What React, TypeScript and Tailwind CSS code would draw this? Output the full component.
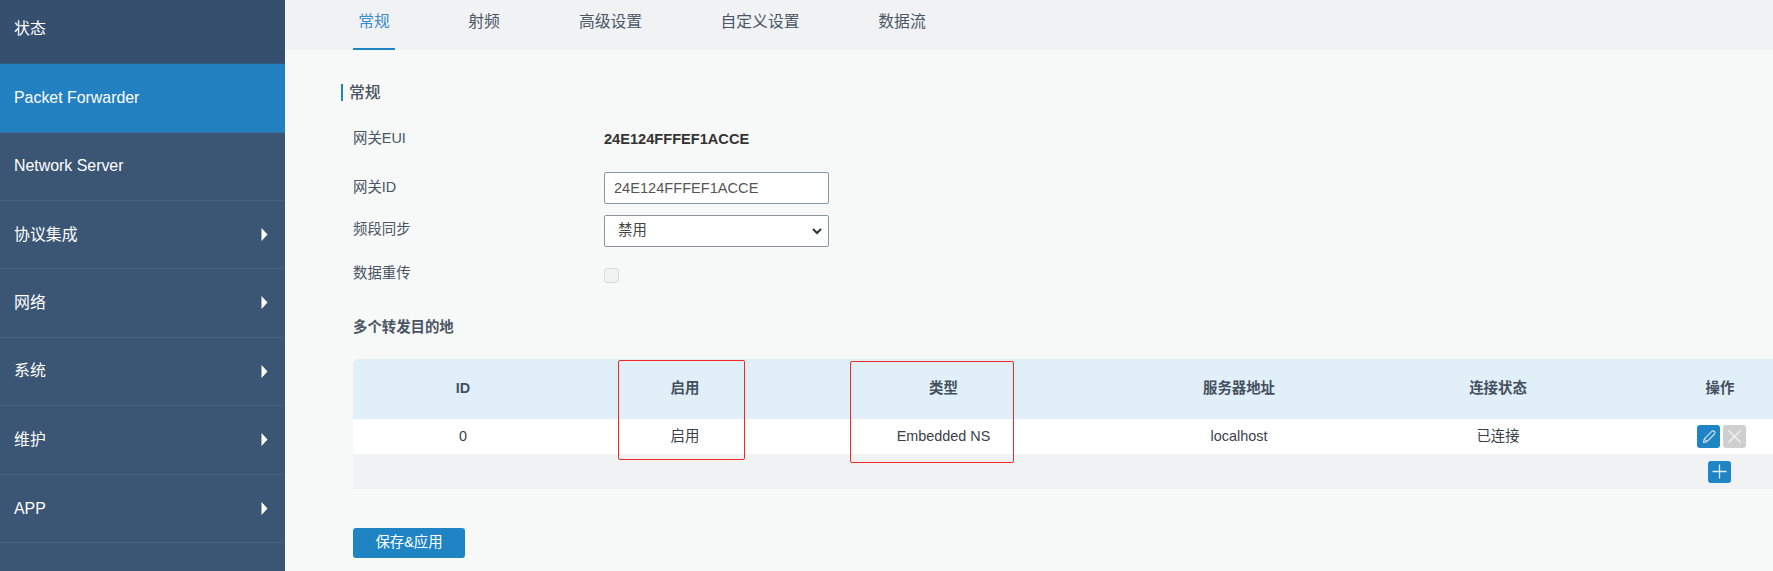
import React from "react";

const menu = [
  { t: "状态", arrow: false, cls: "h-[68.5px] -mt-[4.5px] pb-[1px] bg-[#364f6e] border-b border-[#2f5a85]" },
  { t: "Packet Forwarder", arrow: false, cls: "h-[69px] bg-[#2481c1] border-b border-[#3a6f9f]" },
  { t: "Network Server", arrow: false, cls: "h-[67.5px] border-b border-[#46617f]" },
  { t: "协议集成", arrow: true, cls: "h-[68.5px] pt-[1px] border-b border-[#46617f]" },
  { t: "网络", arrow: true, cls: "h-[68.5px] border-b border-[#46617f]" },
  { t: "系统", arrow: true, cls: "h-[68.5px] border-b border-[#46617f]" },
  { t: "维护", arrow: true, cls: "h-[68.5px] border-b border-[#46617f]" },
  { t: "APP", arrow: true, cls: "h-[68.5px] pt-[1px] border-b border-[#46617f]" },
];

const tabs = [
  { t: "常规", cls: "w-[42px] text-[#3a8ccb] border-b-[2px] border-[#1f84c4]" },
  { t: "射频", cls: "ml-[67px] w-[44px] text-[#4a5666] border-b-[2px] border-transparent" },
  { t: "高级设置", cls: "ml-[67px] w-[75px] text-[#4a5666] border-b-[2px] border-transparent" },
  { t: "自定义设置", cls: "ml-[67px] w-[90px] text-[#4a5666] border-b-[2px] border-transparent" },
  { t: "数据流", cls: "ml-[67px] w-[60px] text-[#4a5666] border-b-[2px] border-transparent" },
];

const gridCols = "grid grid-cols-[220px_224px_293px_298px_220px_224px]";

function Arrow() {
  return (
    <svg width="7" height="13" viewBox="0 0 7 13" className="shrink-0">
      <path d="M0.5 0 L6.5 6.5 L0.5 13 Z" fill="#fff" />
    </svg>
  );
}

function Pencil() {
  return (
    <svg width="16" height="16" viewBox="0 0 16 16" fill="none" stroke="#cfe3f2" strokeWidth="1.1">
      <path d="M2.5 13.5 L3.2 10 L10.8 2.4 C11.6 1.7 12.6 1.7 13.4 2.5 C14.2 3.3 14.2 4.3 13.5 5 L5.9 12.7 Z" />
      <path d="M3.2 10 L5.9 12.7" />
    </svg>
  );
}

function Cross() {
  return (
    <svg width="15" height="15" viewBox="0 0 15 15" fill="none" stroke="#f4f4f4" strokeWidth="1.4">
      <path d="M1.5 1.5 L13.5 13.5 M13.5 1.5 L1.5 13.5" />
    </svg>
  );
}

function Plus() {
  return (
    <svg width="15" height="15" viewBox="0 0 15 15" fill="none" stroke="#dcecf7" strokeWidth="1.3">
      <path d="M7.5 0.5 V14.5 M0.5 7.5 H14.5" />
    </svg>
  );
}

export default function App() {
  return (
    <div className="relative flex h-[571px] w-[1773px] overflow-hidden bg-[#f7f9f9] font-['Liberation_Sans','Noto_Sans_CJK_SC',sans-serif] text-[14.4px] text-[#4a5462]">
      <aside className="flex w-[285px] shrink-0 flex-col bg-[#3b5675] text-[15.9px] text-white">
        {menu.map((m) => (
          <div key={m.t} className={`flex shrink-0 items-center justify-between pl-[14px] pr-[17px] ${m.cls}`}>
            <span>{m.t}</span>
            {m.arrow && <Arrow />}
          </div>
        ))}
      </aside>

      <main className="flex min-w-0 flex-1 flex-col">
        <nav className="flex h-[50px] shrink-0 bg-[#f1f2f4] pl-[68px] text-[15.8px]">
          {tabs.map((t) => (
            <div key={t.t} className={`flex h-[50px] shrink-0 items-center justify-center pb-[4px] ${t.cls}`}>
              {t.t}
            </div>
          ))}
        </nav>

        <div className="flex flex-col pl-[68px]">
          <div className="-ml-[12px] mt-[34px] flex h-[17px] items-center border-l-[2px] border-[#1f84c4] pl-[6px] text-[15.8px] font-medium text-[#4a5462]">
            常规
          </div>

          <div className="mt-[22px] flex h-[32px] items-center">
            <div className="w-[251px] shrink-0">网关EUI</div>
            <div className="pt-[1px] text-[14.6px] font-bold text-[#333]">24E124FFFEF1ACCE</div>
          </div>

          <div className="mt-[17px] flex h-[32px] items-start">
            <div className="w-[251px] shrink-0 leading-[30px]">网关ID</div>
            <input
              readOnly
              value="24E124FFFEF1ACCE"
              className="h-[32px] w-[225px] rounded-[2px] border border-[#8a94a3] bg-white px-[9px] text-[14.6px] text-[#555] outline-none"
            />
          </div>

          <div className="mt-[11px] flex h-[32px] items-start">
            <div className="w-[251px] shrink-0 leading-[29px]">频段同步</div>
            <div className="relative h-[32px] w-[225px]">
              <select className="h-[32px] w-full appearance-none rounded-[2px] border border-[#8a94a3] bg-white pl-[13px] text-[14.4px] text-[#444] outline-none">
                <option>禁用</option>
              </select>
              <svg
                width="10"
                height="7"
                viewBox="0 0 10 7"
                fill="none"
                stroke="#333"
                strokeWidth="2"
                className="pointer-events-none absolute left-[208px] top-[13px]"
              >
                <path d="M1 1 L5 5 L9 1" />
              </svg>
            </div>
          </div>

          <div className="mt-[11px] flex h-[32px] items-start">
            <div className="w-[251px] shrink-0 leading-[30px]">数据重传</div>
            <input
              type="checkbox"
              disabled
              className="mt-[10px] h-[15px] w-[15px] appearance-none rounded-[3px] border border-[#d9dadb] bg-[#f1f2f2]"
            />
          </div>

          <div className="mt-[27px] h-[20px] font-bold leading-[20px] text-[#4a5462]">多个转发目的地</div>

          <div className="mt-[22px] w-[1479px] shrink-0 overflow-hidden rounded-tl-[5px]">
            <div className={`${gridCols} h-[60px] items-center bg-[#e1eff8] text-center font-bold text-[#444f60]`}>
              <div>ID</div>
              <div>启用</div>
              <div>类型</div>
              <div>服务器地址</div>
              <div>连接状态</div>
              <div>操作</div>
            </div>
            <div className={`${gridCols} h-[35px] items-center bg-white text-center text-[#3a3f47]`}>
              <div>0</div>
              <div>启用</div>
              <div>Embedded NS</div>
              <div>localhost</div>
              <div>已连接</div>
              <div className="flex justify-center gap-[3px] pl-[3px]">
                <button className="flex h-[23px] w-[23px] items-center justify-center rounded-[3px] bg-[#1f84c4]">
                  <Pencil />
                </button>
                <button className="flex h-[23px] w-[23px] items-center justify-center rounded-[3px] bg-[#cfcfcf]">
                  <Cross />
                </button>
              </div>
            </div>
            <div className={`${gridCols} h-[35px] items-center bg-[#f1f2f4]`}>
              <div className="col-start-6 flex justify-center pr-[1px]">
                <button className="flex h-[22px] w-[23px] items-center justify-center rounded-[3px] bg-[#1f84c4]">
                  <Plus />
                </button>
              </div>
            </div>
          </div>

          <button className="mt-[39px] h-[30px] w-[112px] rounded-[3px] bg-[#1f84c4] text-center text-[14.4px] text-white">
            保存&应用
          </button>
        </div>
      </main>

      <div className="pointer-events-none absolute left-[618px] top-[360px] h-[100px] w-[127px] rounded-[2px] border-[1.5px] border-[#f22a22]" />
      <div className="pointer-events-none absolute left-[850px] top-[361px] h-[102px] w-[164px] rounded-[2px] border-[1.5px] border-[#f22a22]" />
    </div>
  );
}
